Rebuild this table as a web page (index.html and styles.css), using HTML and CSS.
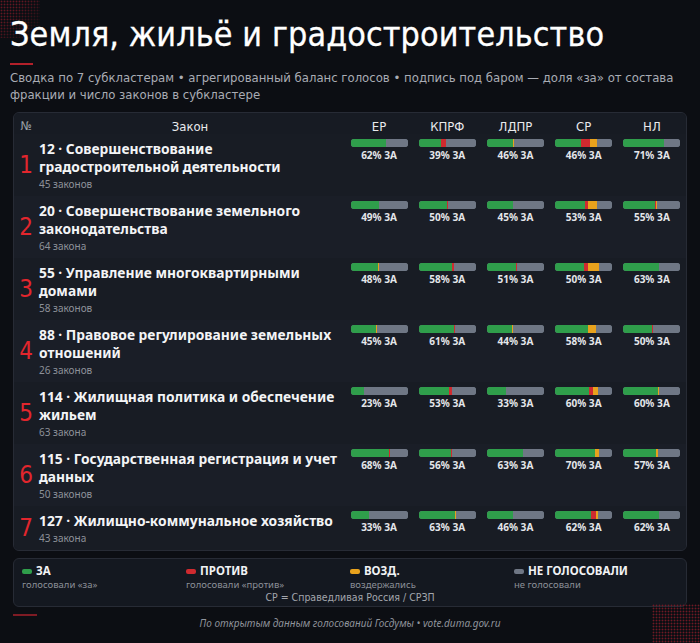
FILE: index.html
```html
<!DOCTYPE html>
<html lang="ru">
<head>
<meta charset="utf-8">
<title>Земля, жильё и градостроительство</title>
<link rel="stylesheet" href="styles.css">
</head>
<body>
<div class="page">
  <div class="dots dots-tl"></div>
  <div class="dots dots-br"></div>
  <header class="head">
    <h1 class="title">Земля, жильё и градостроительство</h1>
    <div class="accent"></div>
    <p class="subtitle">Сводка по 7 субкластерам • агрегированный баланс голосов • подпись под баром — доля «за» от состава фракции и число законов в субкластере</p>
  </header>

  <section class="table">
    <div class="row row-head">
      <div class="c-num h">№</div>
      <div class="c-law h">Закон</div>
      <div class="c-party h">ЕР</div>
      <div class="c-party h">КПРФ</div>
      <div class="c-party h">ЛДПР</div>
      <div class="c-party h">СР</div>
      <div class="c-party h">НЛ</div>
    </div>
  </section>
</div>
<script src="app.js"></script>
</body>
</html>
```

FILE: app.js
```js
const rows = [
  {n:1, t:"12 · Совершенствование градостроительной деятельности", s:"45 законов", v:[[62,0,1],[39,8,0],[46,0,1],[46,15,13],[71,0,1]]},
  {n:2, t:"20 · Совершенствование земельного законодательства", s:"64 закона", v:[[49,0,1],[50,1,0],[45,0,1],[53,4,16],[55,2,2]]},
  {n:3, t:"55 · Управление многоквартирными домами", s:"58 законов", v:[[48,0,1],[58,4,0],[51,1,0],[50,7,20],[63,0,0]]},
  {n:4, t:"88 · Правовое регулирование земельных отношений", s:"26 законов", v:[[45,0,1],[61,3,0],[44,0,1],[58,0,14],[50,2,0]]},
  {n:5, t:"114 · Жилищная политика и обеспечение жильем", s:"63 закона", v:[[23,0,1],[53,5,1],[33,0,1],[60,6,9],[60,0,2]]},
  {n:6, t:"115 · Государственная регистрация и учет данных", s:"50 законов", v:[[68,2,0],[56,2,1],[63,0,0],[70,0,7],[57,0,3]]},
  {n:7, t:"127 · Жилищно-коммунальное хозяйство", s:"43 закона", v:[[33,0,0],[63,0,2],[46,0,0],[62,9,5],[62,0,1]]}
];
const table = document.querySelector('.table');
rows.forEach(r => {
  const row = document.createElement('div');
  row.className = 'row' + (r.n % 2 === 0 ? ' even' : '');
  let html = `<div class="c-num num">${r.n}</div><div class="c-law"><div class="law-t">${r.t}</div><div class="law-s">${r.s}</div></div>`;
  r.v.forEach(([g, p, a]) => {
    const rest = 100 - g - p - a;
    html += `<div class="c-party cell"><div class="bar"><span class="seg g" style="width:${g}%"></span><span class="seg r" style="width:${p}%"></span><span class="seg o" style="width:${a}%"></span><span class="seg n" style="width:${rest}%"></span></div><div class="pct">${g}% ЗА</div></div>`;
  });
  row.innerHTML = html;
  table.appendChild(row);
});
const page = document.querySelector('.page');
const legend = document.createElement('section');
legend.className = 'legend';
legend.innerHTML = `
  <div class="lg-grid">
    <div class="lg"><div class="lg-l"><i class="sw g"></i>ЗА</div><div class="lg-s">голосовали «за»</div></div>
    <div class="lg"><div class="lg-l"><i class="sw r"></i>ПРОТИВ</div><div class="lg-s">голосовали «против»</div></div>
    <div class="lg"><div class="lg-l"><i class="sw o"></i>ВОЗД.</div><div class="lg-s">воздержались</div></div>
    <div class="lg"><div class="lg-l"><i class="sw n"></i>НЕ ГОЛОСОВАЛИ</div><div class="lg-s">не голосовали</div></div>
  </div>
  <div class="lg-note">СР = Справедливая Россия / СРЗП</div>`;
page.appendChild(legend);
const foot = document.createElement('footer');
foot.className = 'foot';
foot.innerHTML = `<div class="accent2"></div><p class="src">По открытым данным голосований Госдумы • vote.duma.gov.ru</p>`;
page.appendChild(foot);
```

FILE: styles.css
```css
* { box-sizing: border-box; }
html, body { margin: 0; padding: 0; }
body {
  background: #0c0e13;
  color: #eceef1;
  font-family: "Noto Sans", "DejaVu Sans", sans-serif;
  width: 700px;
  height: 643px;
  overflow: hidden;
}
.page {
  position: relative;
  width: 700px;
  height: 643px;
  padding: 0 13px 0 13px;
}
.dots {
  position: absolute;
  background-image: radial-gradient(circle, #7a1a26 0.8px, transparent 1.1px);
  background-size: 3px 3px;
  pointer-events: none;
}
.dots-tl {
  left: 0; top: 0; width: 40px; height: 38px;
  -webkit-mask-image: linear-gradient(135deg, #000 30%, transparent 95%);
  mask-image: linear-gradient(135deg, #000 30%, transparent 95%);
  opacity: 0.8;
}
.dots-br {
  right: 0; bottom: 0; width: 48px; height: 39px;
  opacity: 0.9;
}
.head { padding: 15px 0 0 0; margin-left: -3px; position: relative; }
.title {
  margin: 0;
  font-family: "DejaVu Sans Condensed", "DejaVu Sans", sans-serif;
  font-stretch: condensed;
  font-weight: normal;
  font-size: 33.8px;
  line-height: 40px;
  color: #ffffff;
  letter-spacing: 0.1px;
  -webkit-text-stroke: 0.3px #ffffff;
}
.accent {
  width: 23px; height: 2px; background: #b3202a;
  margin-top: 8px;
}
.subtitle {
  margin: 4px 0 0 0;
  font-family: "DejaVu Sans Condensed", "DejaVu Sans", sans-serif;
  font-stretch: condensed;
  font-size: 13px;
  line-height: 17px;
  color: #a9acb4;
  max-width: 670px;
}
.table {
  margin-top: 9px;
  border: 1px solid #272b35;
  border-radius: 6px;
  background: #171b23;
  overflow: hidden;
}
.row {
  display: grid;
  grid-template-columns: 24px 307px repeat(5, 1fr);
  background: #181c24;
}
.row.even { background: #1a1e27; }
.row-head { background: #171b23; height: 21px; align-items: center; }
.h {
  font-family: "DejaVu Sans Condensed", "DejaVu Sans", sans-serif;
  font-stretch: condensed;
  font-size: 13px;
  color: #e9eaed;
  text-align: center;
}
.c-num.h { color: #9ea2aa; font-size: 12px; }
.num {
  font-family: "DejaVu Sans Condensed", "DejaVu Sans", sans-serif;
  font-stretch: condensed;
  font-size: 24px;
  color: #e2262d;
  display: flex;
  align-items: center;
  justify-content: center;
}
.c-law { padding: 6px 4px 5px 1px; }
.law-t {
  font-weight: 700;
  font-size: 13.8px;
  line-height: 18px;
  color: #f3f4f6;
}
.law-s {
  font-size: 10px;
  line-height: 14px;
  color: #8d9199;
  margin-top: 1px;
}
.cell {
  padding-top: 5px;
  display: flex;
  flex-direction: column;
  align-items: center;
}
.bar {
  width: 57px;
  height: 8px;
  border-radius: 3px;
  overflow: hidden;
  display: flex;
  background: #6f7785;
}
.seg { display: block; height: 100%; }
.g { background: #2f9e4b; }
.r { background: #cf2a2f; }
.o { background: #e8a21d; }
.n { background: #6f7785; }
.pct {
  margin-top: 2px;
  font-weight: 700;
  font-size: 10px;
  line-height: 12px;
  color: #e4e6ea;
}
.legend {
  margin-top: 7px;
  border: 1px solid #272b35;
  border-radius: 6px;
  background: #141820;
  padding: 5px 8px 2px 8px;
}
.lg-grid {
  display: grid;
  grid-template-columns: repeat(4, 1fr);
}
.lg-l {
  display: flex;
  align-items: center;
  gap: 4px;
  font-weight: 700;
  font-size: 11.5px;
  line-height: 14px;
  color: #f1f2f4;
}
.sw { display: block; width: 10px; height: 5px; border-radius: 2px; }
.lg-s {
  font-size: 9.5px;
  line-height: 13px;
  color: #8b8f97;
}
.lg-note {
  text-align: center;
  font-family: "DejaVu Sans Condensed", "DejaVu Sans", sans-serif;
  font-stretch: condensed;
  font-size: 10.5px;
  line-height: 13px;
  color: #a3a6ad;
}
.accent2 {
  width: 24px; height: 2px; background: #7e1b24;
  margin-top: 7px;
}
.src {
  margin: 0;
  text-align: center;
  font-style: italic;
  font-size: 10px;
  line-height: 14px;
  color: #8f939b;
}
```
